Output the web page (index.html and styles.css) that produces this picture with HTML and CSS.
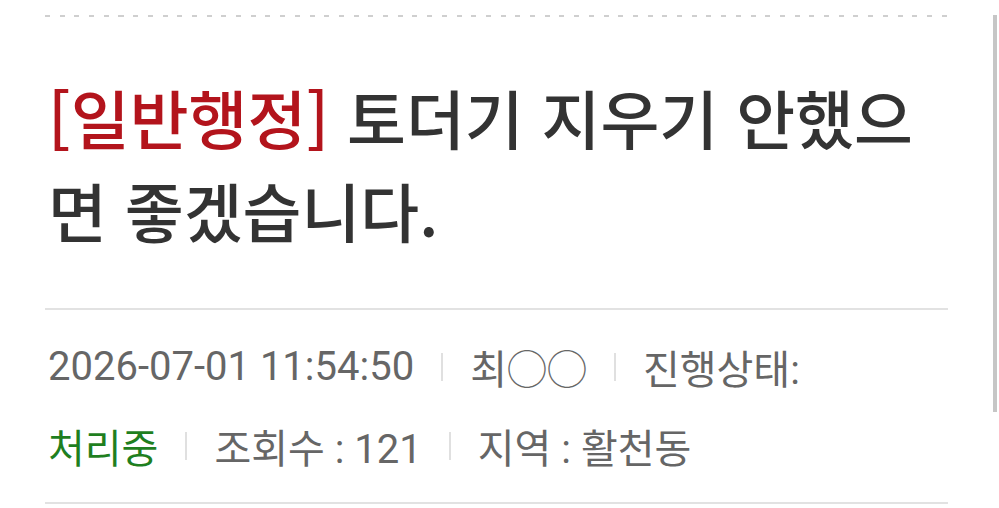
FILE: index.html
```html
<!DOCTYPE html>
<html lang="ko">
<head>
<meta charset="utf-8">
<link rel="stylesheet" href="styles.css">
</head>
<body>
<div class="page">
  <div class="dash"></div>
  <h1 class="title"><span class="cat">[일반행정]</span> 토더기 지우기 안했으면 좋겠습니다.</h1>
  <div class="meta">
    <div class="row">
      <span class="item">2026-07-01 11:54:50</span>
      <span class="sep"></span>
      <span class="item">최◯◯</span>
      <span class="sep"></span>
      <span class="item">진행상태:</span>
    </div>
    <div class="row">
      <span class="item status">처리중</span>
      <span class="sep"></span>
      <span class="item">조회수 : 121</span>
      <span class="sep"></span>
      <span class="item">지역 : 활천동</span>
    </div>
  </div>
</div>
<div class="scrollbar"></div>
</body>
</html>
```
FILE: styles.css
```css
html, body {
  margin: 0;
  padding: 0;
  background: #fff;
}
body {
  font-family: "Noto Sans CJK KR", "Noto Sans", sans-serif;
  width: 999px;
  height: 508px;
  overflow: hidden;
  position: relative;
}
.page {
  padding: 15px 51px 0 45px;
}
.dash {
  height: 2px;
  background: repeating-linear-gradient(90deg, #cfcfcf 0 5px, transparent 5px 14.7px);
}
.title {
  margin: 0;
  padding: 53px 0 52px 3px;
  font-size: 64px;
  line-height: 93px;
  font-weight: 500;
  color: #333;
}
.cat {
  color: #b3141c;
}
.meta {
  border-top: 2px solid #e2e2e2;
  border-bottom: 2px solid #e2e2e2;
  padding: 17px 0 17px 3px;
}
.row {
  display: flex;
  align-items: center;
  height: 79px;
  font-family: Roboto, "Noto Sans CJK KR", sans-serif;
  font-size: 40px;
  color: #666;
}
.sep {
  width: 2px;
  height: 28px;
  background: #e0e0e0;
  margin: 0 27px;
}
.status {
  color: #1f7f1f;
}
.scrollbar {
  position: absolute;
  right: 2px;
  top: 15px;
  width: 4px;
  height: 397px;
  background: #c6c6c6;
}
```
